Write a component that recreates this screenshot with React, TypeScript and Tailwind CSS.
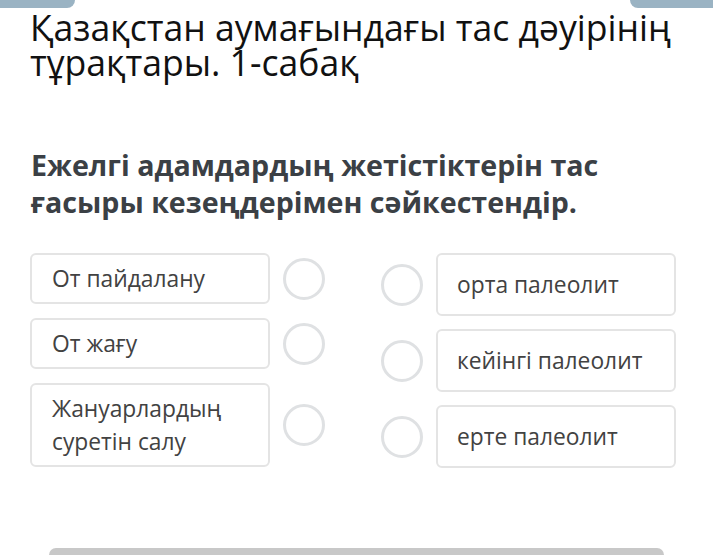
const leftItems = [
  { label: 'От пайдалану', h: 'h-[51px]' },
  { label: 'От жағу', h: 'h-[51px]' },
  { label: 'Жануарлардың суретін салу', h: 'h-[84px]' },
];

const rightItems = ['орта палеолит', 'кейінгі палеолит', 'ерте палеолит'];

function Dot() {
  return <div className="h-[42px] w-[42px] shrink-0 rounded-full border-[3px] border-[#dfe1e3] bg-white" />;
}

export default function App() {
  return (
    <div className="flex h-[555px] w-[713px] flex-col overflow-hidden bg-white font-['Open_Sans',sans-serif]">
      <div className="flex justify-between">
        <div className="h-2 w-[75px] rounded-br-xl bg-[#9ab3c3]" />
        <div className="h-2 w-[83px] rounded-bl-xl bg-[#9ab3c3]" />
      </div>

      <h1 className="mt-[2px] px-[30px] text-[35.6px] leading-[35px] font-normal text-[#111111]">
        Қазақстан аумағындағы тас дәуірінің тұрақтары. 1-сабақ
      </h1>

      <h2 className="mt-[66px] px-[31px] text-[28.6px] leading-[37px] font-bold text-[#3b4045]">
        Ежелгі адамдардың жетістіктерін тас ғасыры кезеңдерімен сәйкестендір.
      </h2>

      <div className="mt-[33px] flex items-start justify-between pr-[37px] pl-[30px]">
        <div className="flex flex-col gap-[14px]">
          {leftItems.map((item) => (
            <div key={item.label} className="flex items-center gap-[13px]">
              <div
                className={`flex w-[240px] items-center rounded-md border-2 border-[#e4e4e4] px-[20px] text-[22.8px] leading-[33px] text-[#424242] ${item.h}`}
              >
                {item.label}
              </div>
              <Dot />
            </div>
          ))}
        </div>

        <div className="flex flex-col gap-[13px]">
          {rightItems.map((label) => (
            <div key={label} className="flex items-center gap-[13px]">
              <Dot />
              <div className="flex h-[63px] w-[240px] items-center rounded-md border-2 border-[#e4e4e4] px-[19px] text-[22.8px] leading-[33px] text-[#424242]">
                {label}
              </div>
            </div>
          ))}
        </div>
      </div>

      <div className="mx-[49px] mt-auto h-[7px] rounded-t-lg bg-[#c8c8c8]" />
    </div>
  );
}
